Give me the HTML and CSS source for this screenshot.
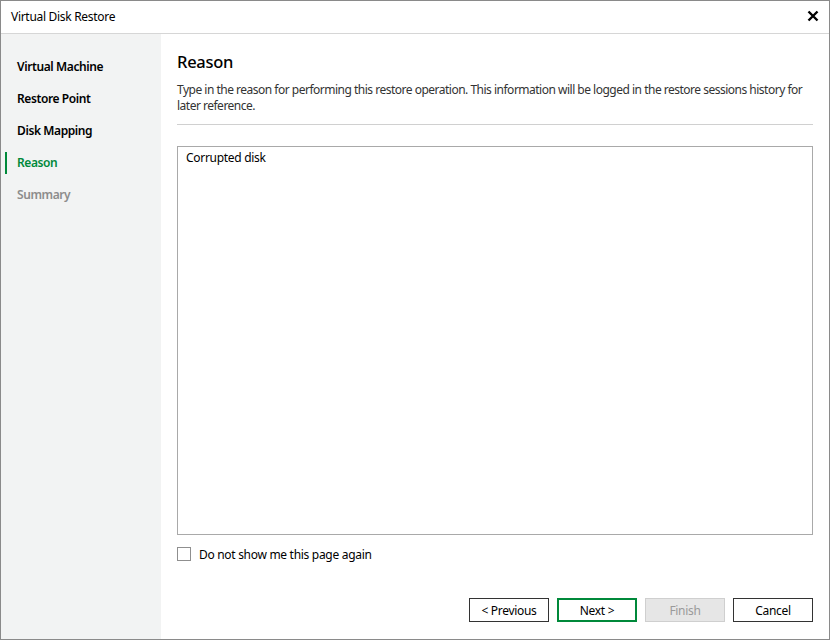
FILE: index.html
```html
<!DOCTYPE html>
<html>
<head>
<meta charset="utf-8">
<link rel="stylesheet" href="styles.css">
</head>
<body>
<div class="window">
  <div class="titlebar">
    <span class="title">Virtual Disk Restore</span>
    <svg class="close" width="12" height="12" viewBox="0 0 12 12"><path d="M1.5 1.5 L10.5 10.5 M10.5 1.5 L1.5 10.5" stroke="#000" stroke-width="2.4" stroke-linecap="butt"/></svg>
  </div>
  <div class="body">
    <nav class="sidebar">
      <div class="step">Virtual Machine</div>
      <div class="step">Restore Point</div>
      <div class="step">Disk Mapping</div>
      <div class="step active">Reason</div>
      <div class="step disabled">Summary</div>
    </nav>
    <main class="content">
      <h1 class="heading">Reason</h1>
      <p class="desc">Type in the reason for performing this restore operation. This information will be logged in the restore sessions history for later reference.</p>
      <div class="sep"></div>
      <div class="textbox">Corrupted disk</div>
      <label class="check"><span class="box"></span>Do not show me this page again</label>
      <div class="buttons">
        <button class="btn">&lt; Previous</button>
        <button class="btn primary">Next &gt;</button>
        <button class="btn disabled">Finish</button>
        <button class="btn">Cancel</button>
      </div>
    </main>
  </div>
</div>
</body>
</html>
```

FILE: styles.css
```css
* { box-sizing: border-box; }
html, body { margin: 0; padding: 0; }
body {
  width: 830px;
  height: 640px;
  font-family: "Noto Sans", "Open Sans", sans-serif;
  font-size: 12px;
  color: #000;
  background: #fff;
}
.window {
  width: 830px;
  height: 640px;
  border: 1px solid #8a8a8a;
  display: flex;
  flex-direction: column;
}
.titlebar {
  height: 33px;
  flex: none;
  border-bottom: 1px solid #d6d6d6;
  display: flex;
  align-items: center;
  justify-content: space-between;
  padding: 0 10px 0 10px;
}
.title {
  font-size: 12px;
  letter-spacing: -0.3px;
  position: relative;
  top: -1px;
}
.close { display: block; margin-top: -2px; }
.body {
  flex: 1;
  display: flex;
  min-height: 0;
}
.sidebar {
  width: 160px;
  flex: none;
  background: #f2f3f3;
  padding-top: 23px;
}
.step {
  height: 32px;
  line-height: 20px;
  padding: 0 0 0 16px;
  font-weight: 600;
  font-size: 12px;
  letter-spacing: -0.4px;
  color: #000;
  position: relative;
}
.step.active { color: #00893a; }
.step.active::before {
  content: "";
  position: absolute;
  left: 4px;
  top: -1px;
  width: 2px;
  height: 22px;
  background: #00893a;
}
.step.disabled { color: #8c8c8c; }
.content {
  flex: 1;
  padding: 16px 16px 17px 16px;
  display: flex;
  flex-direction: column;
}
.heading {
  margin: 0;
  font-size: 16.5px;
  font-weight: 500;
  line-height: 24px;
  letter-spacing: -0.3px;
}
.desc {
  margin: 8px -8px 0 0;
  line-height: 16px;
  color: #333;
  letter-spacing: -0.5px;
}
.sep {
  height: 1px;
  background: #d0d0d0;
  margin-top: 10px;
}
.textbox {
  margin-top: 21px;
  height: 389px;
  border: 1px solid #a9a9a9;
  padding: 3px 8px;
  line-height: 16px;
  letter-spacing: -0.3px;
}
.check {
  margin-top: 11px;
  display: flex;
  align-items: center;
  height: 16px;
  letter-spacing: -0.3px;
}
.box {
  width: 14px;
  height: 14px;
  border: 1px solid #8f8f8f;
  background: #fff;
  margin-right: 8px;
}
.buttons {
  margin-top: auto;
  display: flex;
  justify-content: flex-end;
  gap: 8px;
}
.btn {
  width: 80px;
  height: 24px;
  border: 1px solid #333;
  background: #fff;
  font-family: inherit;
  font-size: 12px;
  letter-spacing: -0.3px;
  color: #000;
  padding: 0;
}
.btn.primary { border: 2px solid #00893a; }
.btn.disabled { background: #e6e6e6; border-color: #cfcfcf; color: #9a9a9a; }
```
